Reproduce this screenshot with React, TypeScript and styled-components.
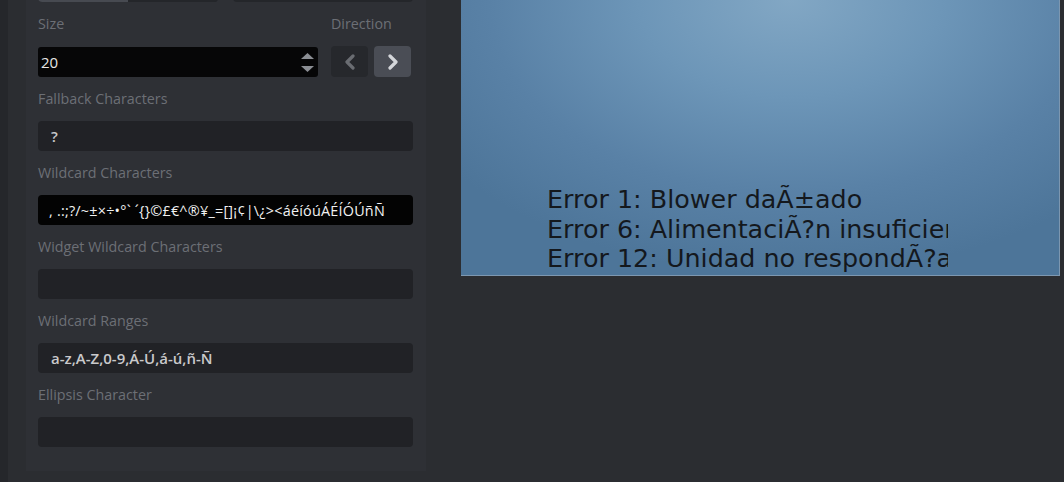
import React from "react";
import styled, { createGlobalStyle } from "styled-components";

const GlobalStyle = createGlobalStyle`
  html, body {
    margin: 0;
    padding: 0;
    background: #2b2d31;
    overflow: hidden;
  }
  body {
    font-family: "Open Sans", "Noto Sans", sans-serif;
  }
`;

const Screen = styled.div`
  display: flex;
  width: 1064px;
  height: 482px;
  background: #2b2d31;
  overflow: hidden;
`;

const Rail = styled.div`
  width: 8px;
  background: #25272b;
  flex-shrink: 0;
`;

const SideColumn = styled.div`
  width: 400px;
  margin-left: 18px;
  height: 471px;
  overflow: hidden;
  flex-shrink: 0;
`;

const Panel = styled.div`
  background: #2e3035;
  margin-top: -28px;
  padding: 0 13px 26px 12px;
  display: flex;
  flex-direction: column;
`;

const TopRow = styled.div`
  display: flex;
  gap: 15px;
  height: 30px;
  margin-bottom: 12px;
`;

const Segmented = styled.div`
  display: flex;
  width: 180px;
  border-radius: 4px;
  overflow: hidden;
  background: #24262a;
`;

const Segment = styled.div<{ $active?: boolean }>`
  flex: 1;
  background: ${(p) => (p.$active ? "#474a51" : "#24262a")};
`;

const Field = styled.div`
  display: flex;
  flex-direction: column;
  margin-bottom: 12px;
`;

const Label = styled.div`
  height: 20px;
  line-height: 20px;
  font-size: 14.3px;
  color: #6c6f75;
  margin-bottom: 12px;
  white-space: nowrap;
`;

const SizeRow = styled.div`
  display: flex;
  align-items: flex-start;
`;

const SizeGroup = styled.div`
  display: flex;
  flex-direction: column;
  width: 280px;
`;

const DirGroup = styled.div`
  display: flex;
  flex-direction: column;
  margin-left: 13px;
`;

const NumberBox = styled.div`
  height: 30px;
  margin-top: 1px;
  background: #060607;
  border-radius: 3px;
  display: flex;
  align-items: center;
  justify-content: space-between;
  padding: 0 4px 0 3px;
  color: #e6e6e6;
  font-size: 15px;
`;

const Spinner = styled.div`
  display: flex;
  flex-direction: column;
  gap: 7px;
`;

const DirButtons = styled.div`
  display: flex;
  gap: 6px;
`;

const DirButton = styled.div<{ $active?: boolean }>`
  width: 37px;
  height: 31px;
  border-radius: 4px;
  background: ${(p) => (p.$active ? "#4a4d55" : "#26282c")};
  display: flex;
  align-items: center;
  justify-content: center;
`;

const TextBox = styled.div<{ $dark?: boolean; $bold?: boolean }>`
  height: 30px;
  border-radius: 4px;
  background: ${(p) => (p.$dark ? "#030303" : "#212226")};
  color: ${(p) => (p.$dark ? "#f2f2f2" : "#c9c9cb")};
  font-size: ${(p) => (p.$dark ? "14.4px" : "15px")};
  letter-spacing: ${(p) => (p.$dark ? "0.22px" : "0")};
  font-weight: ${(p) => (p.$bold ? 600 : 400)};
  display: flex;
  align-items: center;
  padding: 0 11px 0 ${(p) => (p.$dark ? "11px" : "13px")};
  white-space: pre;
  overflow: hidden;
`;

const Stage = styled.div`
  flex: 1;
  padding-left: 35px;
  padding-right: 4px;
`;

const Preview = styled.div`
  position: relative;
  height: 276px;
  background: radial-gradient(
    ellipse 72% 100% at 55% 0%,
    #82a7c4 0%,
    #6d96b8 35%,
    #5981a6 70%,
    #4d7599 100%
  );
  border-right: 1px solid #7d97b0;
  border-bottom: 1px solid #7d97b0;
  box-sizing: border-box;
  overflow: hidden;
`;

/* the label widget on the preview canvas: its text overflows its box */
const ErrorList = styled.div`
  position: absolute;
  left: 86px;
  top: 185px;
  width: 401px;
  height: 90px;
  overflow: hidden;
  font-family: "DejaVu Sans", Verdana, sans-serif;
  font-size: 25.4px;
  line-height: 29.6px;
  color: #14181d;
  white-space: nowrap;
`;

const Arrow = ({ dir, color }: { dir: "left" | "right"; color: string }) => (
  <svg width="12" height="16" viewBox="0 0 12 16">
    <path
      d={dir === "left" ? "M9 2 L3 8 L9 14" : "M3 2 L9 8 L3 14"}
      fill="none"
      stroke={color}
      strokeWidth="3.2"
      strokeLinecap="round"
      strokeLinejoin="round"
    />
  </svg>
);

const fields = [
  { label: "Fallback Characters", value: "?", bold: true },
  {
    label: "Wildcard Characters",
    value: ", .:;?/~±×÷•°` ´{}©£€^®¥_=[]¡¢|\\¿><áéíóúÁÉÍÓÚñÑ",
    dark: true,
  },
  { label: "Widget Wildcard Characters", value: "" },
  { label: "Wildcard Ranges", value: "a-z,A-Z,0-9,Á-Ú,á-ú,ñ-Ñ", bold: true },
  { label: "Ellipsis Character", value: "" },
];

const errors = [
  "Error 1: Blower daÃ±ado",
  "Error 6: AlimentaciÃ?n insuficiente",
  "Error 12: Unidad no respondÃ?a",
];

export default function App() {
  return (
    <Screen>
      <GlobalStyle />
      <Rail />
      <SideColumn>
        <Panel>
          <TopRow>
            <Segmented>
              <Segment $active />
              <Segment />
            </Segmented>
            <Segmented />
          </TopRow>
          <Field>
            <SizeRow>
              <SizeGroup>
                <Label>Size</Label>
                <NumberBox>
                  <span>20</span>
                  <Spinner>
                    <svg width="13" height="6" viewBox="0 0 13 6">
                      <path d="M0 6 L6.5 0 L13 6 Z" fill="#8b8e94" />
                    </svg>
                    <svg width="13" height="6" viewBox="0 0 13 6">
                      <path d="M0 0 L6.5 6 L13 0 Z" fill="#8b8e94" />
                    </svg>
                  </Spinner>
                </NumberBox>
              </SizeGroup>
              <DirGroup>
                <Label>Direction</Label>
                <DirButtons>
                  <DirButton>
                    <Arrow dir="left" color="#6a6d72" />
                  </DirButton>
                  <DirButton $active>
                    <Arrow dir="right" color="#d4d6da" />
                  </DirButton>
                </DirButtons>
              </DirGroup>
            </SizeRow>
          </Field>
          {fields.map((f) => (
            <Field key={f.label}>
              <Label>{f.label}</Label>
              <TextBox $dark={f.dark} $bold={f.bold}>
                {f.value}
              </TextBox>
            </Field>
          ))}
        </Panel>
      </SideColumn>
      <Stage>
        <Preview>
          <ErrorList>
            {errors.map((e) => (
              <div key={e}>{e}</div>
            ))}
          </ErrorList>
        </Preview>
      </Stage>
    </Screen>
  );
}
